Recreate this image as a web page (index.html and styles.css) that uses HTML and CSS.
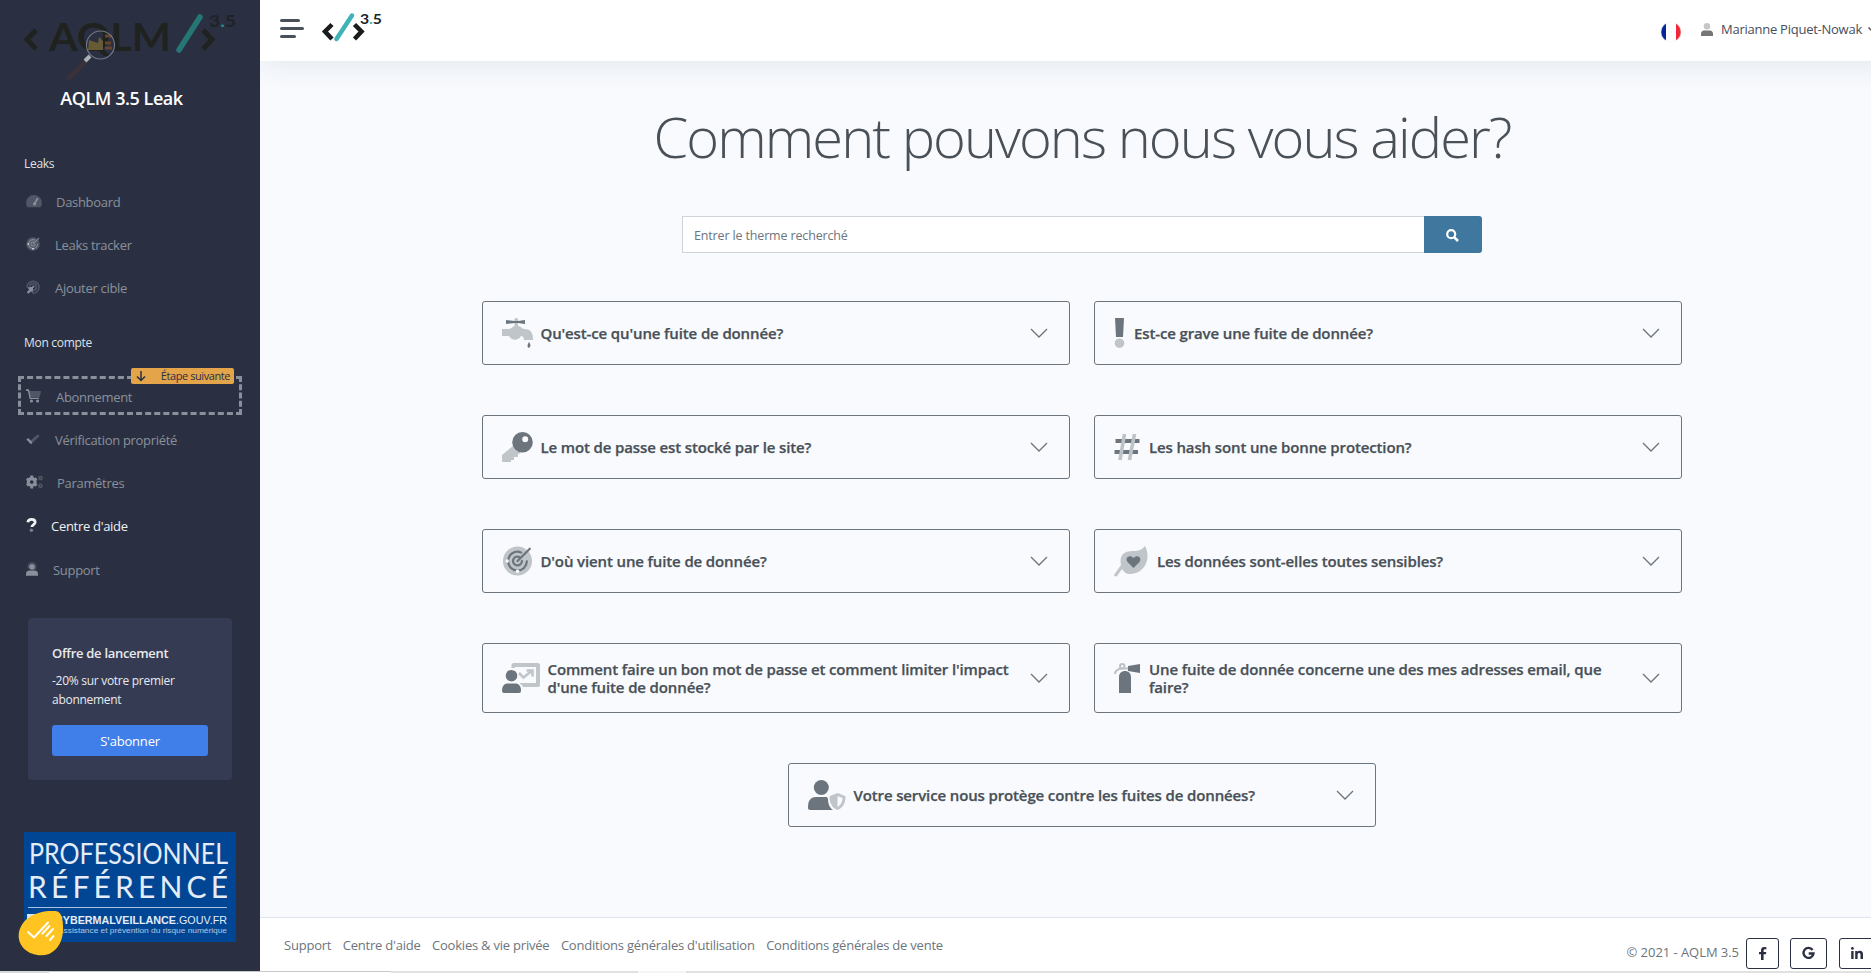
FILE: index.html
```html
<!DOCTYPE html>
<html lang="fr">
<head>
<meta charset="utf-8">
<title>AQLM 3.5 Leak - Centre d'aide</title>
<link rel="stylesheet" href="styles.css">
</head>
<body>
<svg width="0" height="0" class="defs">
  <symbol id="chevron" viewBox="0 0 18 10"><path d="M1 1l8 8 8-8" fill="none" stroke="currentColor" stroke-width="1.3"/></symbol>
  <symbol id="target" viewBox="0 0 512 512">
    <circle class="s" cx="256" cy="256" r="248"/>
    <path d="M318 110A160 160 0 0 0 96 256a160 160 0 0 0 320 6M294 190a76 76 0 1 0 38 66M256 256L466 46" fill="none" stroke="currentColor" stroke-width="38" stroke-linecap="round"/>
    <circle cx="80" cy="256" r="30" class="dot"/><circle cx="256" cy="432" r="30" class="dot"/>
  </symbol>
</svg>
<div class="app">
  <aside class="sidebar">
    <div class="brand">
      <svg class="brand-logo" width="236" height="84" viewBox="0 0 236 84">
        <g fill="none" stroke="#20221f" stroke-width="5"><path d="M36 30L27 39.500L36 49M203 30l9 9.500-9 9.500"/></g>
        <text x="49" y="51" class="wordmark" textLength="122" lengthAdjust="spacingAndGlyphs">AQLM</text>
        <path d="M179 50L200 17" stroke="#257674" stroke-width="5.500" stroke-linecap="round"/>
        <text x="209" y="26.500" class="ver" textLength="27" lengthAdjust="spacingAndGlyphs">3<tspan fill="#258a89">.</tspan>5</text>
        <path d="M89 40l9 3 1-6 4 4v9H88z" fill="#675b36"/>
        <path d="M105 36h7M105 43h6M105 48h7" stroke="#69452b" stroke-width="3"/>
        <path d="M86 61L68 79" stroke="#3a3236" stroke-width="4.500"/><path d="M90 56l-5 5" stroke="#aeb1b8" stroke-width="4"/>
        <circle cx="100.500" cy="45" r="14" fill="none" stroke="#747985" stroke-width="1.200"/>
      </svg>
      <div class="brand-name">AQLM 3.5 Leak</div>
    </div>
    <div class="label">Leaks</div>
    <a class="item"><svg width="16" height="14" viewBox="0 0 576 512"><path class="s" d="M288 32A288 288 0 0 0 36 459c6 13 16 21 28 21h448c12 0 22-8 28-21A288 288 0 0 0 288 32z"/><path d="M396 137L306 300a60 60 0 1 0 54 26l96-152z"/></svg><span class="g14">Dashboard</span></a>
    <a class="item"><svg width="14" height="14"><use href="#target"/></svg><span class="g15">Leaks tracker</span></a>
    <a class="item"><svg width="14" height="14" viewBox="0 0 512 512"><g fill="none" stroke="currentColor" stroke-width="58" opacity=".4"><path d="M35 270a220 220 0 1 1 200 212"/><path d="M130 250a125 125 0 1 1 130 130"/></g><path d="M45 275l220-25-24 220-57-57-93 93-62-62 93-93z"/><circle cx="270" cy="240" r="40"/></svg><span class="g15">Ajouter cible</span></a>
    <div class="label second">Mon compte</div>
    <a class="item next"><svg width="15" height="14" viewBox="0 0 576 512"><path class="s" d="M110 64h443c15 0 26 14 23 29l-52 210H160z"/><path d="M0 0h98c12 0 21 8 23 19l60 301h326l-7 34c-2 11-12 19-23 19H138L74 66H0z"/><circle cx="210" cy="450" r="60"/><circle cx="445" cy="450" r="60"/></svg><span class="g15">Abonnement</span>
      <b class="step"><svg width="10" height="11" viewBox="0 0 10 11"><path d="M5 0v9.500M1 5.500l4 4 4-4" fill="none" stroke="currentColor" stroke-width="1.500"/></svg><span>Étape suivante</span></b></a>
    <a class="item up"><svg width="14" height="14" viewBox="0 0 512 512"><path class="s" d="M435 85l62 62-310 305-88-88z"/><path d="M15 277l62-62 148 148-38 89z"/></svg><span class="g15">Vérification propriété</span></a>
    <a class="item up"><svg width="17" height="14" viewBox="0 0 640 512"><g fill="none" stroke="currentColor" opacity=".4"><circle cx="545" cy="110" r="58" stroke-width="60"/><circle cx="545" cy="400" r="58" stroke-width="60"/></g><circle cx="215" cy="256" r="128" fill="none" stroke="currentColor" stroke-width="116"/><path d="M160 10h110v90H160zM160 412h110v90H160zM0 180l60-96 90 56-60 96zM280 372l50-86 100 56-60 96zM0 332l60 96 90-56-60-96zM280 140l60 86 90-56-60-96z"/></svg><span class="g14">Paramêtres</span></a>
    <a class="item active up"><svg width="11" height="14" viewBox="0 0 384 512"><path d="M55 155C70 80 120 50 192 50c80 0 135 42 135 105 0 90-122 80-122 175" fill="none" stroke="currentColor" stroke-width="100"/><circle class="s" cx="188" cy="445" r="64"/></svg><span class="g14">Centre d'aide</span></a>
    <a class="item"><svg width="12" height="14" viewBox="0 0 448 512"><path class="s" d="M60 230C40 80 120 0 224 0s184 80 164 230c-10 50-60 60-120 60v-50h80v-60C348 90 300 50 224 50S100 90 100 180v60H60z"/><circle cx="224" cy="175" r="108"/><path d="M0 512V440c0-80 50-125 134-125h180c84 0 134 45 134 125v72z"/></svg><span class="g15">Support</span></a>
    <div class="promo">
      <strong>Offre de lancement</strong>
      <p>-20% sur votre premier<br>abonnement</p>
      <a class="btn">S'abonner</a>
    </div>
    <div class="certificate">
      <svg width="212" height="110" viewBox="0 0 212 110">
        <rect width="212" height="110" fill="#004695"/>
        <text x="5" y="31.500" class="cert-xl" textLength="199" lengthAdjust="spacingAndGlyphs">PROFESSIONNEL</text>
        <text x="4" y="66" class="cert-l" textLength="206">RÉFÉRENCÉ</text>
        <path d="M4 75.500h199" stroke="#a9c2df"/>
        <path d="M3 82h30v20H3z" fill="#dbe6f4"/>
        <text x="31" y="92" class="cert-s" textLength="172" lengthAdjust="spacingAndGlyphs"><tspan font-weight="700">CYBERMALVEILLANCE</tspan>.GOUV.FR</text>
        <text x="34" y="101" class="cert-xs" textLength="169" lengthAdjust="spacingAndGlyphs">Assistance et prévention du risque numérique</text>
      </svg>
      <svg class="cookie" width="48" height="46" viewBox="0 0 48 46"><path d="M2 22C5 8 20 0 38 1c4 0 6 3 7 7 3 15 0 30-13 36C17 49-1 39 2 22z" fill="#ffc421"/><path d="M11 22l6 5.500 14-15M25.500 23.500l7-7.500M29.500 26l6.500-7M33 30l3.500-4" fill="none" stroke="#fff" stroke-width="1.900" stroke-linecap="round" stroke-linejoin="round"/></svg>
    </div>
  </aside>
  <div class="main">
    <header class="topbar">
      <div class="burger"><i></i><i class="long"></i><i class="short"></i></div>
      <svg width="62" height="36" viewBox="0 0 62 36"><path d="M10 14.500L3 21.500 10 29M32.500 14.500l7 7L32.500 29" fill="none" stroke="#191b1c" stroke-width="4.500"/><path d="M14.500 29L30 5.500" stroke="#3fb3b8" stroke-width="4.500" stroke-linecap="round"/><text x="38" y="13.500" class="ver top" textLength="22" lengthAdjust="spacingAndGlyphs">3<tspan fill="#3fb3b8">.</tspan>5</text></svg>
      <div class="user">
        <svg width="20" height="20" viewBox="0 0 20 20"><defs><clipPath id="round"><circle cx="10" cy="10" r="10"/></clipPath></defs><g clip-path="url(#round)"><path fill="#fff" d="M0 0h20v20H0z"/><path fill="#00279a" d="M0 0h5v20H0z"/><path fill="#f22739" d="M15 0h5v20h-5z"/></g><circle cx="10" cy="10" r="9.800" fill="none" stroke="#e8e8ee" stroke-width=".3"/></svg>
        <svg class="user-icon" width="12" height="13" viewBox="0 0 12 13"><circle cx="6" cy="3.200" r="3.200" fill="#c6c6c6"/><path d="M0 13v-2c0-2 1.200-3.400 3.200-3.400h5.600c2 0 3.200 1.400 3.200 3.400v2z" fill="#757575"/></svg>
        <span>Marianne Piquet-Nowak</span>
        <svg class="caret" width="7" height="5" viewBox="0 0 7 5"><path d="M.5.5l3 3 3-3" fill="none" stroke="#555" stroke-width="1.500"/></svg>
      </div>
    </header>
    <main class="content">
      <h1>Comment pouvons nous vous aider?</h1>
      <form class="search"><input placeholder="Entrer le therme recherché"><button type="button"><svg width="13" height="13" viewBox="0 0 13 13"><circle cx="5.200" cy="5.200" r="4" fill="none" stroke="#fff" stroke-width="2.200"/><path d="M8.300 8.300l3.700 3.700" stroke="#fff" stroke-width="2.600"/></svg></button></form>
      <div class="faq">
        <article class="card"><svg width="31" height="30" viewBox="0 0 31 30"><path class="s" d="M12.500 1.500c0-2 3.500-2 3.500 0V8c3 0 4 3 6 3 6 0 9 3 9 11h-9c0-2-1-4-3-4-3 5-9 5-12 0H0v-7h6c3 0 4-2 6.500-3z"/><path d="M4 2l9 1h3l7-1v4l-7-1h-3l-9 1zM27 24c5 7-5 8 0 0z"/></svg><h2>Qu'est-ce qu'une fuite de donnée?</h2><svg class="chev"><use href="#chevron"/></svg></article>
        <article class="card right"><svg width="11" height="30" viewBox="0 0 11 30"><path d="M1 0h9L9 19H2z"/><circle class="s" cx="5.500" cy="25.200" r="4.800"/></svg><h2>Est-ce grave une fuite de donnée?</h2><svg class="chev"><use href="#chevron"/></svg></article>
        <article class="card"><svg width="31" height="30" viewBox="0 0 31 30"><path class="s" d="M11 14l8 7-3 1v3h-4v3H9v2H1c-1 0-1-1-1-1v-6z"/><path fill-rule="evenodd" d="M20.500 0a10.300 10.300 0 1 1 0 20.600 10.300 10.300 0 0 1 0-20.600zm2.700 4.300a3 3 0 1 0 0 6 3 3 0 0 0 0-6z"/></svg><h2>Le mot de passe est stocké par le site?</h2><svg class="chev"><use href="#chevron"/></svg></article>
        <article class="card right"><svg width="26" height="30" viewBox="0 0 26 30"><path d="M1.500 9h24M.5 20h23.500" stroke="currentColor" stroke-width="3.800"/><path d="M10.500 2L6 28M20.500 2L15.500 28" stroke="#bdc3c7" stroke-width="3.600"/></svg><h2>Les hash sont une bonne protection?</h2><svg class="chev"><use href="#chevron"/></svg></article>
        <article class="card"><svg width="31" height="30"><use href="#target"/></svg><h2>D'où vient une fuite de donnée?</h2><svg class="chev"><use href="#chevron"/></svg></article>
        <article class="card right"><svg width="34" height="30" viewBox="0 0 34 30"><path class="s" d="M31 0c7 13-1 28-15 28-4 0-6-2-8-5l-5 7c-1 1-3 0-3-1l7-10C5 9 10 5 19 5c6 0 9-1 12-5z"/><path d="M19.500 22l-6-6c-3-4 2-8 6-4 4-4 9 0 6 4z"/></svg><h2>Les données sont-elles toutes sensibles?</h2><svg class="chev"><use href="#chevron"/></svg></article>
        <article class="card tall"><svg width="38" height="30" viewBox="0 0 38 30"><path class="s" d="M9.500 5V2c0-1 1-2 2-2H36c1 0 2 1 2 2v20c0 1-1 2-2 2H21c-1-2-2-3-3-3v-1h16V4H13v1z"/><path d="M17 10l4.500 4.500L29 8.500M24.500 7.500h6v6" class="s line"/><circle cx="9.500" cy="12.700" r="5.800"/><path d="M0 28c0-5 2-7.500 6-7.500h7c4 0 6 2.500 6 7.500 0 1-1 2-2 2H2c-1 0-2-1-2-2z"/></svg><h2>Comment faire un bon mot de passe et comment limiter l'impact d'une fuite de donnée?</h2><svg class="chev"><use href="#chevron"/></svg></article>
        <article class="card tall right"><svg width="26" height="30" viewBox="0 0 26 30"><path d="M1 11c0-4 3-5 7-5.500h7" fill="none" stroke="#bdc3c7" stroke-width="2.200"/><circle cx="8.200" cy="3.200" r="2.200" fill="none" stroke="#bdc3c7" stroke-width="2"/><path d="M14 3l12-2v9L14 8zM5 14c0-8 12-8 12 0v16H5z"/></svg><h2>Une fuite de donnée concerne une des mes adresses email, que faire?</h2><svg class="chev"><use href="#chevron"/></svg></article>
        <article class="card last"><svg width="38" height="30" viewBox="0 0 38 30"><circle cx="13.300" cy="7.500" r="7.500"/><path d="M0 28c0-7 2-11 8-11h11l1 2c0 5 2 9 5 11H2c-1 0-2-1-2-2z"/><path class="s" fill-rule="evenodd" d="M29.500 13l8 3.200c0 6.500-2 11-8 13.800-6-2.800-8-7.300-8-13.800zm0 3v11c3.500-2 5-5 5-9z"/></svg><h2>Votre service nous protège contre les fuites de données?</h2><svg class="chev"><use href="#chevron"/></svg></article>
      </div>
    </main>
    <footer class="footer">
      <nav><a>Support</a><a>Centre d'aide</a><a>Cookies &amp; vie privée</a><a>Conditions générales d'utilisation</a><a>Conditions générales de vente</a></nav>
      <div class="social"><span>© 2021 - AQLM 3.5</span>
        <a class="f"><svg width="8" height="13" viewBox="0 0 8 13"><path d="M2 13V7.300H0V5h2V3.300C2 1.200 3.200 0 5.200 0L7.400.2v2H6.200C5 2.200 4.600 2.800 4.600 3.600V5h2.700l-.4 2.300H4.600V13z"/></svg></a>
        <a class="goo"><svg width="13" height="13" viewBox="0 0 13 13"><path d="M10.600 3A5 5 0 1 0 11.500 6.500H6.700" fill="none" stroke="currentColor" stroke-width="2.300"/></svg></a>
        <a class="lin"><svg width="12" height="12" viewBox="0 0 12 12"><circle cx="1.400" cy="1.400" r="1.400"/><path d="M.2 4h2.400v8H.2zM4.200 4h2.300v1.200C7.300 3.300 12 3 12 7v5H9.500V7.600c0-2.300-2.900-2-2.900 0V12H4.200z"/></svg></a>
      </div>
    </footer>
  </div>
</div>
<div class="edge"><i></i><i></i><i></i><i></i></div>
</body>
</html>
```

FILE: styles.css
```css
* { box-sizing: border-box; }
body { margin: 0; height: 973px; overflow: hidden; font: 400 13px "Open Sans", "Noto Sans", sans-serif; letter-spacing: -.3px; color: #495057; background: #f8fafe; }
.defs { position: absolute; }
.app { display: flex; width: 1904px; height: 971px; }
svg { flex: none; fill: currentColor; overflow: visible; }
.s { opacity: .4; }
.line { fill: none; stroke: currentColor; stroke-width: 2.6; }
.dot { fill: #f8fafe; }

.sidebar { width: 260px; flex: none; background: #2a3042; color: #8a909b; display: flex; flex-direction: column; }
.sidebar .dot { fill: #2a3042; }
.brand { height: 147px; color: #fff; }
.brand-logo { display: block; }
.brand-name { margin: 1px 0 0 -17px; text-align: center; font-size: 18px; line-height: 26px; font-weight: 600; letter-spacing: -.45px; }
.wordmark { font: 700 39px Lato, sans-serif; fill: #20221f; letter-spacing: 0; }
.ver { font: 700 17px Lato, sans-serif; fill: #202225; letter-spacing: 0; }
.ver.top { font-size: 14px; }
.label { height: 33px; line-height: 33px; padding-left: 24px; font-size: 12px; color: #dfe1e6; }
.label.second { height: 67px; line-height: 67px; }
.item { height: 43px; display: flex; align-items: center; padding-left: 26px; line-height: 20px; }
.g14 { margin-left: 14px; padding-top: 1px; }
.g15 { margin-left: 15px; padding-top: 1px; }
.item svg { margin-top: -1px; }
.item.up { padding-bottom: 2px; }
.item.active { color: #f0f1f4; }
.item.next { position: relative; height: 39px; margin: 0 18px 4px; padding: 2px 0 0 5px; border: 3px dashed #8a909b; }
.step { position: absolute; right: 5px; top: -11px; width: 103px; height: 16px; padding: 0 4px 0 5px; display: flex; align-items: center; justify-content: space-between; border-radius: 2px; background: #e4a44a; color: #2a3042; font-size: 11px; font-weight: 400; line-height: 16px; letter-spacing: -.42px; }
.step svg { margin: 0; }

.promo { width: 204px; height: 162px; margin: 27px 28px 0; padding: 24px; border-radius: 4px; background: #343b52; color: #e9eaee; }
.promo strong { display: block; font-weight: 600; line-height: 22px; }
.promo p { margin: 7px 0 16px; font-size: 12px; line-height: 19px; letter-spacing: -.28px; }
.btn { display: block; height: 31px; border-radius: 3px; background: #407fe9; color: #fff; text-align: center; line-height: 32px; letter-spacing: -.2px; }
.certificate { position: relative; margin: 52px 24px 0; height: 110px; }
.certificate text { fill: #e4ecf7; letter-spacing: 0; }
.cookie { position: absolute; left: -7px; top: 78px; }
.cert-xl { font: 400 28px Lato, sans-serif; }
.certificate .cert-l { font: 400 30px Lato, sans-serif; letter-spacing: 6px; }
.cert-s { font: 400 11px "Liberation Sans", sans-serif; }
.cert-xs { font: 400 8px "Liberation Sans", sans-serif; opacity: .75; }

.main { width: 1644px; display: flex; flex-direction: column; }
.topbar { height: 61px; flex: none; display: flex; align-items: center; padding: 0 29px 0 20px; background: #fff; box-shadow: 0 0 32px rgba(50, 70, 75, .13); clip-path: inset(0 0 -40px 0); }
.topbar > svg { margin: -6px 0 0 18px; }
.burger { width: 24px; display: grid; gap: 5px; margin-top: -4px; }
.burger i { height: 3px; width: 20px; border-radius: 2px; background: #495057; }
.burger .long { width: 24px; }
.burger .short { width: 16px; }
.user { margin-left: auto; display: flex; align-items: center; color: #474d5b; letter-spacing: -.25px; }
.user > svg:first-child { margin-top: 2px; }
.user-icon { margin: -3px 8px 0 20px; }
.user span { margin-top: -4px; width: 141px; white-space: nowrap; }
.caret { margin: -2px 0 0 6px; }

.content { flex: 1; display: flex; flex-direction: column; align-items: center; }
h1 { margin: 37px 0 0; font-size: 56px; line-height: 76px; font-weight: 300; letter-spacing: -1.93px; color: #495057; white-space: nowrap; }
.search { display: flex; width: 800px; height: 37px; margin-top: 42px; }
input { flex: 1; min-width: 0; border: 1px solid #ced4da; border-right: 0; padding: 3px 11px 1px; font: inherit; font-size: 12.5px; letter-spacing: -.15px; background: #fff; }
input::placeholder { color: #6c757d; opacity: 1; }
button { width: 58px; border: 0; padding: 1px 2px 0 0; border-radius: 0 3px 3px 0; background: #3f779f; display: grid; place-items: center; }
.faq { display: grid; grid-template-columns: 588px 588px; column-gap: 24px; row-gap: 50px; margin-top: 48px; }
.card { height: 64px; display: flex; align-items: center; padding: 0 21px 0 19px; border: 1px solid #6c757d; border-radius: 3px; color: #6c757d; }
.card > svg:first-child { margin-top: -1px; }
.card h2 { flex: 1; margin: -1px 10px 0 7.5px; font-size: 15px; line-height: 18px; font-weight: 600; letter-spacing: -.13px; color: #495057; -webkit-text-stroke: .25px #495057; }
.card.right h2 { margin-left: 9px; }
.card.tall { height: 70px; }
.card .chev { width: 18px; height: 10px; margin-top: -1px; }
.card.last { width: 588px; grid-column: 1 / 3; justify-self: center; }

.footer { height: 54px; flex: none; display: flex; justify-content: space-between; padding: 0 29px 0 24px; border-top: 1px solid #dee5ef; background: #fff; color: #6c757d; letter-spacing: -.22px; }
.footer nav { display: flex; gap: 11.5px; line-height: 55px; }
.social { display: flex; align-items: center; padding-top: 17px; height: 53px; line-height: 30px; }
.social span { margin: -2px 7px 0 0; letter-spacing: -.05px; }
.social a { height: 31px; border: 1px solid #2a3042; border-radius: 3px; color: #2a3042; display: grid; place-items: center; }
.social .f { width: 33px; margin-right: 11px; }
.social .goo { width: 37px; margin-right: 12px; }
.social .lin { width: 36px; }
.edge { display: flex; height: 2px; }
.edge i { width: 49px; background: #d6d7da; }
.edge i:nth-child(2) { width: 342px; background: #fff; border-top: 1px solid #c8c8c8; }
.edge i:nth-child(3) { width: 247px; background: #e1e1e1; }
.edge i:nth-child(4) { width: 1233px; background: linear-gradient(90deg, #f5f5f5 48px, #e1e1e1 48px); }
```
